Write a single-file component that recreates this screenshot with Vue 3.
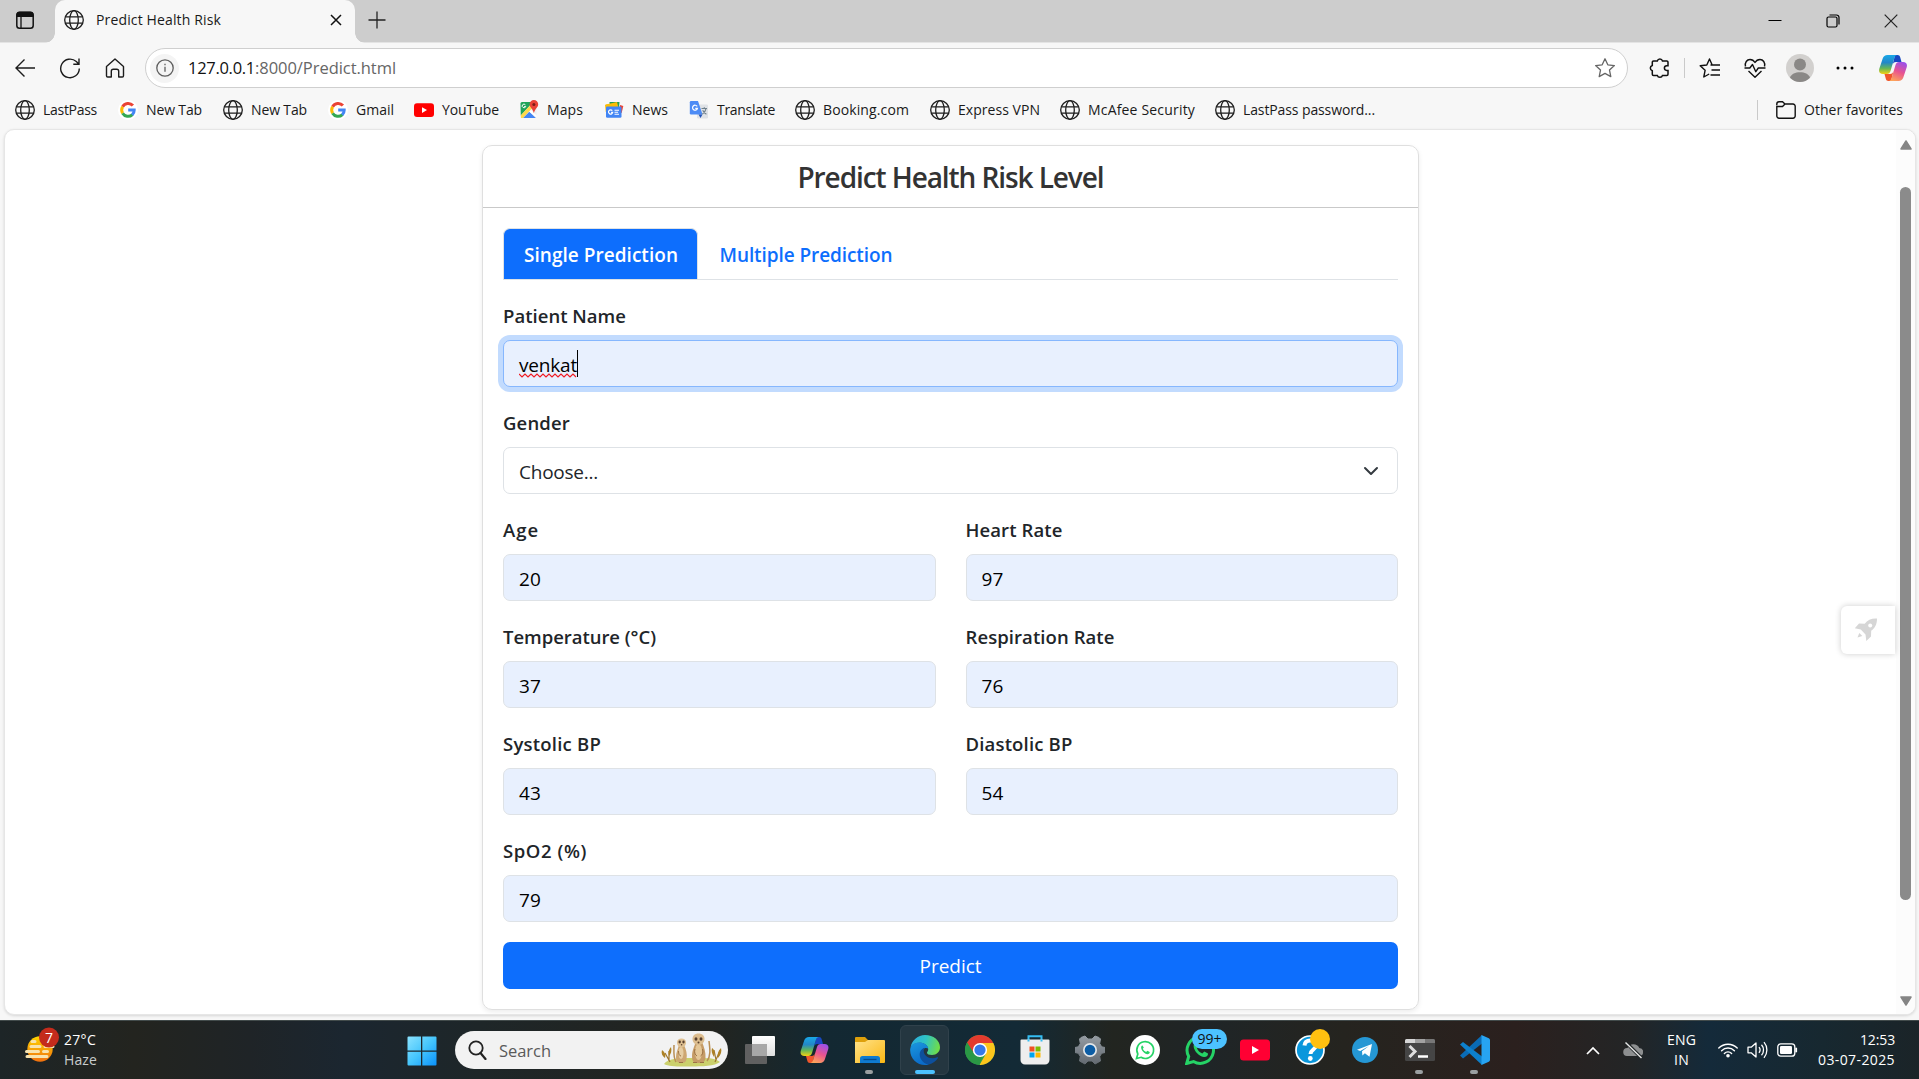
<script setup>
import { ref } from 'vue'

// Adjusts the tracking of a label so that it fills the given measure in px.
const vFit = {
  mounted(el, { value }) {
    el.style.letterSpacing = '0px'
    const natural = el.getBoundingClientRect().width
    el.style.letterSpacing = (value - natural) / el.textContent.trim().length + 'px'
  },
}

const bookmarks = [
  { icon: 'globe', label: 'LastPass', measure: 54, slot: 103 },
  { icon: 'google', label: 'New Tab', measure: 56, slot: 105 },
  { icon: 'globe', label: 'New Tab', measure: 56, slot: 105 },
  { icon: 'google', label: 'Gmail', measure: 38, slot: 86 },
  { icon: 'youtube', label: 'YouTube', measure: 57, slot: 105 },
  { icon: 'maps', label: 'Maps', measure: 36, slot: 85 },
  { icon: 'news', label: 'News', measure: 36, slot: 85 },
  { icon: 'translate', label: 'Translate', measure: 58, slot: 106 },
  { icon: 'globe', label: 'Booking.com', measure: 86, slot: 135 },
  { icon: 'globe', label: 'Express VPN', measure: 82, slot: 130 },
  { icon: 'globe', label: 'McAfee Security', measure: 107, slot: 155 },
  { icon: 'globe', label: 'LastPass password...', measure: 132, slot: 165 },
]

const rows = ref([
  [
    { label: 'Age', measure: 36, value: '20' },
    { label: 'Heart Rate', measure: 97, value: '97' },
  ],
  [
    { label: 'Temperature (°C)', measure: 153, value: '37' },
    { label: 'Respiration Rate', measure: 149, value: '76' },
  ],
  [
    { label: 'Systolic BP', measure: 98, value: '43' },
    { label: 'Diastolic BP', measure: 107, value: '54' },
  ],
  [{ label: 'SpO2 (%)', measure: 84, value: '79' }],
])
</script>

<template>
  <div class="screen">
    <svg class="defs" width="0" height="0" aria-hidden="true">
      <defs>
        <symbol id="globe" viewBox="0 0 20 20">
          <g fill="none" stroke="#1d1d1d" stroke-width="1.3">
            <circle cx="10" cy="10" r="9.3" />
            <ellipse cx="10" cy="10" rx="4.3" ry="9.3" />
            <path d="M1.3 6.8h17.4M1.3 13.2h17.4" />
          </g>
        </symbol>
        <symbol id="google" viewBox="0 0 20 20">
          <circle cx="10" cy="10" r="10" fill="#fff" />
          <g fill="none" stroke-width="3">
            <path d="M14.9 5.6A6.3 6.3 0 0 0 4.6 6.8" stroke="#ea4335" />
            <path d="M4.6 6.8a6.3 6.3 0 0 0 0 6.4" stroke="#fbbc05" />
            <path d="M4.6 13.2a6.3 6.3 0 0 0 9.8 1.4" stroke="#34a853" />
            <path d="M14.2 14.8a6.3 6.3 0 0 0 2-4.8H10.2" stroke="#4285f4" />
          </g>
        </symbol>
        <symbol id="youtube" viewBox="0 0 20 20">
          <rect y="3.2" width="20" height="13.8" rx="3" fill="#f00" />
          <path d="M8 7.2v5.8l5-2.9z" fill="#fff" />
        </symbol>
        <symbol id="maps" viewBox="0 0 20 20">
          <rect x="1.5" y="2" width="16" height="16" rx="1.5" fill="#eceff1" />
          <path d="M1.5 3.5A1.5 1.5 0 0 1 3 2h11L1.8 15.5z" fill="#1fa45a" />
          <path d="M1.8 15.3 13 3.4l2.4 2.4L4.2 18H2z" fill="#fdd94c" />
          <path d="m4.2 18 6.1-6.3 6.5 6.3z" fill="#4285f4" />
          <path d="M10.3 11.7 12 10l5.5 5.6v2z" fill="#fff" />
          <path d="M14.9 0a4.3 4.3 0 0 0-4.3 4.3c0 3.2 3.4 4.6 4.3 9 .9-4.4 4.3-5.8 4.3-9A4.3 4.3 0 0 0 14.9 0z" fill="#e94235" />
          <circle cx="14.9" cy="4.4" r="1.5" fill="#7c1c14" />
          <path d="M6.4 4.8a1.8 1.8 0 1 0 .3 1.7H5.2" fill="none" stroke="#fff" stroke-width="1" />
        </symbol>
        <symbol id="news" viewBox="0 0 20 20">
          <path d="M5.500 2h10l-.6 7h-9z" fill="#1e9e52" />
          <path d="m2 4.500 11-2.500 2 8-11 2z" fill="#fbbc04" />
          <path d="m16 5 3.300 1-1.600 7-2.700-1z" fill="#ea4335" />
          <path d="m1 4.800 3-.6v7L1.800 12z" fill="#fbbc04" />
          <rect x="2" y="6.500" width="15.500" height="11.300" rx="1.300" fill="#4285f4" />
          <path d="M8.300 10.700a2.100 2.100 0 1 0 .4 1.700H7.100" fill="none" stroke="#fff" stroke-width="1.200" />
          <path d="M10.500 10.300h4.500M10.500 12.300h3.600M10.500 14.300h4.500" stroke="#fff" stroke-width="1.100" />
        </symbol>
        <symbol id="translate" viewBox="0 0 20 20">
          <rect x="8" y="4.500" width="11" height="14" rx="1.200" fill="#dfe2e6" />
          <path d="M2 1h7l4.500 13.500H2A1.200 1.200 0 0 1 .8 13.300V2.200A1.200 1.200 0 0 1 2 1z" fill="#4c8bf5" />
          <path d="M9.500 14.500h4l-2 3.500z" fill="#2454b8" />
          <path d="M8.200 6.400a2.500 2.500 0 1 0 .3 1.900H6.300" fill="none" stroke="#fff" stroke-width="1.200" />
          <path d="M12.500 8.500h5.500M15.300 7.200v1.300M17 8.700c-.4 2.300-2 4.300-3.600 5.300M13.700 10.200c.8 1.800 2 3 3.700 4" fill="none" stroke="#70808c" stroke-width="1.100" />
        </symbol>
        <linearGradient id="cpA" x1="0" y1="0" x2="0" y2="1">
          <stop offset="0" stop-color="#18a8e8" />
          <stop offset=".4" stop-color="#2387c8" />
          <stop offset=".7" stop-color="#63b658" />
          <stop offset="1" stop-color="#f4d012" />
        </linearGradient>
        <linearGradient id="cpB" x1=".7" y1="0" x2=".3" y2="1">
          <stop offset="0" stop-color="#9b50e8" />
          <stop offset=".5" stop-color="#e9548f" />
          <stop offset="1" stop-color="#fda45a" />
        </linearGradient>
        <symbol id="copilot" viewBox="0 0 28 26">
          <path d="M16 0h2.500c1.500 0 2.300.8 2.700 2.200L22.500 7H17c-2 0-3 1-3.500 3z" fill="#1748c2" />
          <path d="M12 26H9.500c-1.500 0-2.300-.8-2.700-2.200L5.500 19H11c2 0 3-1 3.500-3z" fill="#f0562c" />
          <path d="M8.500 0H18c-1.500.3-2.200 1.600-2.700 3.200L11.500 16c-.6 2-1.700 3-3.700 3H4c-3.200 0-4.600-2.200-3.700-5.200L3.700 3.500C4.500 1.200 6 0 8.500 0z" fill="url(#cpA)" />
          <path d="M19.500 26H10c1.500-.3 2.200-1.600 2.700-3.200L16.500 10c.6-2 1.700-3 3.700-3H24c3.200 0 4.600 2.200 3.700 5.200l-3.400 10.300c-.8 2.300-2.300 3.500-4.800 3.500z" fill="url(#cpB)" />
        </symbol>
      </defs>
    </svg>

    <header class="tabstrip">
      <div class="workspaces">
        <svg width="20" height="20" viewBox="0 0 20 20">
          <rect x="1.800" y="2.500" width="16.400" height="15.700" rx="2.800" fill="none" stroke="#111" stroke-width="1.500" />
          <path d="M1.500 7V4.500A3 3 0 0 1 4.500 1.500h11a3 3 0 0 1 3 3V7z" fill="#111" />
          <path d="M6 7v11" stroke="#111" stroke-width="1.300" />
        </svg>
      </div>
      <div class="tab">
        <svg width="20" height="20"><use href="#globe" /></svg>
        <span class="tab-title"><span v-fit="125">Predict Health Risk</span></span>
        <svg class="tab-close" width="12" height="12" viewBox="0 0 12 12"><path d="M1 1l10 10M11 1 1 11" stroke="#111" stroke-width="1.500" /></svg>
      </div>
      <svg class="new-tab" width="18" height="18" viewBox="0 0 18 18"><path d="M9 .5v17M.5 9h17" stroke="#222" stroke-width="1.300" /></svg>
      <div class="window-controls">
        <svg width="14" height="14" viewBox="0 0 14 14"><path d="M.5 6.500h13" stroke="#000" stroke-width="1" /></svg>
        <svg width="14" height="14" viewBox="0 0 14 14">
          <rect x="1" y="3" width="10" height="10" rx="1.500" fill="none" stroke="#000" stroke-width="1.200" />
          <path d="M3.500 1h7a2.500 2.500 0 0 1 2.500 2.500v7" fill="none" stroke="#000" stroke-width="1.200" />
        </svg>
        <svg width="14" height="14" viewBox="0 0 14 14"><path d="M.7.7l12.600 12.600M13.300.7.7 13.300" stroke="#222" stroke-width="1.200" /></svg>
      </div>
    </header>

    <nav class="toolbar">
      <svg class="nav-icon" width="22" height="22" viewBox="0 0 22 22"><path d="M21 11H2M10.500 2.500 2 11l8.500 8.500" fill="none" stroke="#1c1c1c" stroke-width="1.400" /></svg>
      <svg class="nav-icon" width="22" height="22" viewBox="0 0 22 22"><path d="M20.300 11.500a9.300 9.300 0 1 1-3-6.900L20 7.200M20 1.500v5.700h-5.700" fill="none" stroke="#1c1c1c" stroke-width="1.400" /></svg>
      <svg class="nav-icon" width="22" height="22" viewBox="0 0 22 22"><path d="M2.500 9.500 11 2l8.500 7.500v9.300a1.200 1.200 0 0 1-1.200 1.200h-3.600v-5.800a2 2 0 0 0-2-2h-3.400a2 2 0 0 0-2 2V20H3.700a1.200 1.200 0 0 1-1.200-1.200z" fill="none" stroke="#1c1c1c" stroke-width="1.400" stroke-linejoin="round" /></svg>
      <div class="address">
        <span class="info">
          <svg width="18" height="18" viewBox="0 0 18 18"><circle cx="9" cy="9" r="8.200" fill="none" stroke="#5e5e5e" stroke-width="1.300" /><path d="M9 7.800v5M9 4.800v1.500" stroke="#5e5e5e" stroke-width="1.300" /></svg>
        </span>
        <span class="url"><span v-fit="67" class="host">127.0.0.1</span><span v-fit="141">:8000/Predict.html</span></span>
        <svg class="star" width="22" height="22" viewBox="0 0 22 22"><path d="m11 1.800 2.800 6 6.600.8-4.900 4.500 1.300 6.500-5.800-3.200-5.800 3.200 1.300-6.500-4.900-4.500 6.600-.8z" fill="none" stroke="#666" stroke-width="1.300" stroke-linejoin="round" /></svg>
      </div>
      <svg class="puzzle" width="22" height="22" viewBox="0 0 22 22"><path d="M4.500 4h3.800a2.700 2.700 0 0 1 5.200 0h4.300a1.200 1.200 0 0 1 1.200 1.200v3.600h-1.300a2.300 2.300 0 0 0 0 4.600H19v3.800a1.200 1.200 0 0 1-1.200 1.200h-4.300a2.700 2.700 0 0 1-5.200 0H4.500a1.200 1.200 0 0 1-1.200-1.200v-3.500a2.700 2.700 0 0 1 0-5.200V5.200A1.200 1.200 0 0 1 4.500 4z" fill="none" stroke="#111" stroke-width="1.500" /></svg>
      <i class="divider"></i>
      <svg class="favs" width="22" height="22" viewBox="0 0 22 22"><path d="M13.200 8 10.500 2 7.800 8 1.200 8.800l4.900 4.500L4.800 20l5.400-3M11.500 8h9.500M12.500 13h8.500M11.500 18h9.500" fill="none" stroke="#111" stroke-width="1.400" stroke-linejoin="round" /></svg>
      <svg class="heart" width="22" height="22" viewBox="0 0 22 22"><path d="M1.500 9.500C.5 5.500 3 2.500 6 2.500c2.200 0 3.900 1.200 5 3 1.100-1.800 2.800-3 5-3 3 0 5.500 3 4.500 7M4.500 14l6.500 6.300 6.500-6.300M.5 11h5.300l2.700-3.500 3.300 7.200 2.500-3.700h7.200" fill="none" stroke="#111" stroke-width="1.400" stroke-linejoin="round" /></svg>
      <svg class="avatar" width="28" height="28" viewBox="0 0 28 28">
        <circle cx="14" cy="14" r="14" fill="#d2d0ce" />
        <circle cx="14" cy="10.500" r="6" fill="#8a8886" />
        <path d="M4 23.700C5.500 20 9.200 18.300 14 18.300s8.500 1.700 10 5.400A14 14 0 0 1 14 28a14 14 0 0 1-10-4.300z" fill="#8a8886" />
      </svg>
      <svg class="more" width="18" height="4" viewBox="0 0 18 4"><circle cx="2" cy="2" r="1.500" /><circle cx="9" cy="2" r="1.500" /><circle cx="16" cy="2" r="1.500" /></svg>
      <svg class="copilot" width="28" height="26"><use href="#copilot" /></svg>
    </nav>

    <div class="bookmarks">
      <span v-for="(b, i) in bookmarks" :key="i" class="bookmark" :style="{ width: b.slot + 'px' }">
        <svg width="20" height="20"><use :href="'#' + b.icon" /></svg>
        <span v-fit="b.measure" class="name">{{ b.label }}</span>
      </span>
      <span class="other">
        <svg width="20" height="18" viewBox="0 0 20 18"><path d="M.8 4V3A2.200 2.200 0 0 1 3 .8h3.500L9 3h8a2.200 2.200 0 0 1 2.200 2.200V15a2.200 2.200 0 0 1-2.200 2.200H3A2.200 2.200 0 0 1 .8 15V4.500M.8 5.500h5.700L9 3" fill="none" stroke="#111" stroke-width="1.400" /></svg>
        <span v-fit="99" class="name">Other favorites</span>
      </span>
    </div>

    <main class="viewport">
      <div class="page">
        <section class="card">
          <h4><span v-fit="306">Predict Health Risk Level</span></h4>
          <div class="card-body">
            <div class="tabs">
              <button class="pill active"><span v-fit="154">Single Prediction</span></button>
              <button class="pill"><span v-fit="173">Multiple Prediction</span></button>
            </div>
            <div class="field">
              <label><span v-fit="123">Patient Name</span></label>
              <div class="input focused">
                <span class="typed"><span v-fit="58">venkat</span><svg class="squiggle" width="59" height="5" viewBox="0 0 59 5"><path d="M0 1l3 3 3-3 3 3 3-3 3 3 3-3 3 3 3-3 3 3 3-3 3 3 3-3 3 3 3-3 3 3 3-3 3 3 3-3 3 3" fill="none" stroke="#f01c24" stroke-width="1.200" /></svg></span><i class="caret"></i>
              </div>
            </div>
            <div class="field">
              <label><span v-fit="67">Gender</span></label>
              <div class="input select">
                <span v-fit="79">Choose...</span>
                <svg width="16" height="16" viewBox="0 0 16 16"><path d="m2 5 6 6 6-6" fill="none" stroke="#343a40" stroke-width="2" stroke-linecap="round" stroke-linejoin="round" /></svg>
              </div>
            </div>
            <div v-for="(row, i) in rows" :key="i" class="row">
              <div v-for="f in row" :key="f.label" class="field">
                <label><span v-fit="f.measure">{{ f.label }}</span></label>
                <div class="input"><span v-fit="22">{{ f.value }}</span></div>
              </div>
            </div>
            <button class="predict"><span v-fit="62">Predict</span></button>
          </div>
        </section>
        <div class="rocket">
          <svg width="24" height="26" viewBox="0 0 24 26"><path d="M23 1.500c-5.500-.3-9.500 1.500-12.300 5.300L5 6.500.8 11.300l6 1.200 4.700 5 .8 6.500 4.700-4.500.2-5.700C21 11 23 7.500 23 1.500z" fill="#d6d6d6" /><circle cx="16.200" cy="8.500" r="2" fill="#fff" /><path d="m3.500 20.500 1.800-4.500 3 3z" fill="#d6d6d6" /></svg>
        </div>
      </div>
      <div class="scrollbar">
        <svg width="12" height="10" viewBox="0 0 12 10"><path d="M6 1 11 9H1z" fill="#858585" stroke="#858585" stroke-width="1.500" stroke-linejoin="round" /></svg>
        <i class="thumb"></i>
        <svg width="12" height="10" viewBox="0 0 12 10"><path d="M6 9 1 1h10z" fill="#858585" stroke="#858585" stroke-width="1.500" stroke-linejoin="round" /></svg>
      </div>
    </main>

    <footer class="taskbar">
      <div class="weather">
        <svg width="36" height="38" viewBox="0 0 36 38">
          <defs><linearGradient id="sun" x1="0" y1="0" x2="0" y2="1"><stop offset="0" stop-color="#ffd500" /><stop offset="1" stop-color="#f0700e" /></linearGradient></defs>
          <circle cx="17" cy="22" r="12.700" fill="url(#sun)" />
          <g stroke="#f8e3ae" stroke-width="3" stroke-linecap="round"><path d="M9 14.500h3M8 19.500h9M22 19.500h8M3.500 24.500h12M20.500 24.500h4M4 29.500h20" /></g>
          <circle cx="26" cy="10.500" r="10" fill="#c42b1c" />
          <text x="26" y="15.500" text-anchor="middle" font-size="14" fill="#fff">7</text>
        </svg>
        <div class="weather-text"><span v-fit="32">27°C</span><span v-fit="33" class="dim">Haze</span></div>
      </div>
      <div class="dock">
        <svg class="start" width="30" height="30" viewBox="0 0 30 30">
          <defs><linearGradient id="win" x1="0" y1="0" x2="1" y2="1"><stop offset="0" stop-color="#8be3ff" /><stop offset=".5" stop-color="#45c5fc" /><stop offset="1" stop-color="#0a91fb" /></linearGradient></defs>
          <path d="M1.500.5H14v14H.5v-13a1 1 0 0 1 1-1zM15.300.5h13.200a1 1 0 0 1 1 1v13H15.300zM.5 15.800H14v13.700H1.500a1 1 0 0 1-1-1zM15.300 15.800h14.200v12.700a1 1 0 0 1-1 1H15.300z" fill="url(#win)" />
        </svg>
        <div class="search">
          <svg width="19" height="20" viewBox="0 0 19 20"><circle cx="8" cy="8" r="6.700" fill="none" stroke="#222" stroke-width="1.800" /><path d="m12.500 13 5 6" stroke="#222" stroke-width="2.200" stroke-linecap="round" /></svg>
          <span v-fit="52">Search</span>
          <svg class="meerkats" width="62" height="34" viewBox="0 0 62 34">
            <path d="M3 31c4-6 17-6 28-6s23-1 28 4c-5 4-18 4.500-29 4.500S8 34 3 31z" fill="#cbd06c" />
            <path d="M15 29c-3-5-2-11-2-17M46 28c4-5 3-12 2-20" fill="none" stroke="#b98f55" stroke-width="1.500" />
            <g fill="none" stroke="#9d752c" stroke-width="1.200"><path d="M9 29 4 20M8 28V18M54 29l4-9M55 27l-2-10" /></g>
            <path d="M4 25c-3-2-4-5-3-8 3 2 4 5 3 8zM8 23c-1-4 0-7 2-9 1 4 0 7-2 9zM57 25c3-3 4-7 3-10-3 3-4 6-3 10zM53 24c-2-3-3-6-2-9 3 2 3 6 2 9z" fill="#ad8125" />
            <path d="M18 12h5c2 4 3.500 9 2.500 14-.5 3-2 4-5 4s-5.500-1-5.500-6 2-8 3-12z" fill="#cda671" />
            <ellipse cx="20" cy="20" rx="2.500" ry="6" fill="#e6cda3" />
            <path d="M16 9.500C16 7 17.800 5.500 20.500 5.500S25 7 25 9.500s-1.700 5-4.500 5-4.500-2.500-4.500-5z" fill="#dfc193" />
            <path d="M34.500 9h6.500c2 5 4 10 3.500 16-.5 4-2.500 5-7 5S31 29 31 23s2.500-9 3.500-14z" fill="#c59b66" />
            <ellipse cx="37.500" cy="19" rx="3.500" ry="8" fill="#e4c798" />
            <path d="M31.500 6c0-3.300 2.300-5.500 6-5.500s6 2.200 6 5.500-2.500 6-6 6-6-2.700-6-6z" fill="#dcbd8f" />
            <g fill="#59402e"><ellipse cx="18.700" cy="9" rx="1.200" ry="1.400" /><ellipse cx="22.500" cy="9" rx="1.200" ry="1.400" /><ellipse cx="35" cy="6" rx="1.500" ry="1.700" /><ellipse cx="40" cy="6" rx="1.500" ry="1.700" /><circle cx="20.600" cy="11.700" r=".8" /><circle cx="37.500" cy="9.500" r="1" /></g>
            <path d="M34 16c-1 3 0 6 2 7M41.500 16c1 3 0 6-2 7M17.500 18c0 3 1 5 2.500 5M32 29.500h4M39 29.500h4M18 29.500h4" fill="none" stroke="#9c7245" stroke-width="1" />
          </svg>
        </div>

        <span class="app">
          <svg width="30" height="28" viewBox="0 0 30 28">
            <defs><linearGradient id="tvA" x1="0" y1="0" x2="0" y2="1"><stop offset="0" stop-color="#fff" /><stop offset="1" stop-color="#dedede" /></linearGradient></defs>
            <rect x="7" width="23" height="20" rx="1" fill="url(#tvA)" /><rect y="8" width="22" height="20" rx="1" fill="#606060" /><path d="M7 8h15v12H7z" fill="#a7a7a7" />
          </svg>
        </span>
        <span class="app"><svg width="29" height="26"><use href="#copilot" /></svg></span>
        <span class="app">
          <svg width="30" height="28" viewBox="0 0 30 28">
            <defs><linearGradient id="fold" x1="0" y1="0" x2="1" y2="1"><stop offset="0" stop-color="#ffe28a" /><stop offset="1" stop-color="#fbb813" /></linearGradient></defs>
            <path d="M0 2a1 1 0 0 1 1-1h9l3 3h10v6H0z" fill="#dea00b" />
            <path d="M0 6h10l3-2h16a1 1 0 0 1 1 1v21a1 1 0 0 1-1 1H0z" fill="url(#fold)" />
            <path d="M5 27v-4.500A2.500 2.500 0 0 1 7.500 20h15a2.500 2.500 0 0 1 2.500 2.500V27z" fill="#0f7bd0" /><path d="M8.500 23.500h13" stroke="#064b8c" stroke-width="1.300" />
          </svg>
          <i class="run"></i>
        </span>
        <span class="app current">
          <svg width="30" height="30" viewBox="0 0 30 30">
            <defs>
              <linearGradient id="edA" x1="0" y1=".2" x2="1" y2=".4"><stop offset="0" stop-color="#2aabe2" /><stop offset=".5" stop-color="#2fc3c4" /><stop offset="1" stop-color="#6fdc4a" /></linearGradient>
              <linearGradient id="edB" x1="0" y1="0" x2=".4" y2="1"><stop offset="0" stop-color="#1b98df" /><stop offset="1" stop-color="#0b6cc9" /></linearGradient>
            </defs>
            <path d="M.6 12C2 5 8 0 15 0c8.500 0 15 5.500 15 12.300 0 4.700-3.500 7.700-8 7.700-3 0-5-1-5-2.300 0-1 1.200-1.200 1.200-3.400C18.200 10.500 14 7.800 9.500 7.800 5.500 7.800 2.300 9.500.6 12z" fill="url(#edA)" />
            <path d="M.2 14C.8 10 4.500 7.600 9.300 7.600c4.700 0 8.700 2.700 9 6-3-1.700-7.600.4-7.600 5.200 0 5 3.700 9.700 8.300 10.700C17.700 29.900 16.400 30 15 30 6.500 30-.5 22.700.2 14z" fill="url(#edB)" />
            <path d="M15.500 12.700c-3 .3-5.800 2.700-5.800 6.800 0 5.200 4.500 9.700 9.300 10 3.700-1 7-3.500 9-6.500.3-.6-.2-1-.8-.7-1.400.6-3 .9-4.700.9-5 0-8.800-3.200-8.800-7.200 0-1.400.7-2.600 1.800-3.300z" fill="#0d4f9c" />
          </svg>
          <i class="run on"></i>
        </span>
        <span class="app">
          <svg width="30" height="30" viewBox="0 0 30 30">
            <circle cx="15" cy="15" r="15" fill="#34a04a" />
            <path d="M15 8h13.300A15 15 0 0 0 2 7.500L9 18.500z" fill="#e33b2e" />
            <path d="M28.300 8H15l6.100 10.500L14.500 30A15 15 0 0 0 28.300 8z" fill="#fcc51c" />
            <path d="M2 7.500 9 18.500l6 3.500h2l-2.500 8A15 15 0 0 1 2 7.500z" fill="#2a9845" />
            <circle cx="15" cy="15" r="7.100" fill="#fff" /><circle cx="15" cy="15" r="5.600" fill="#3579e9" />
          </svg>
        </span>
        <span class="app">
          <svg width="30" height="30" viewBox="0 0 30 30">
            <path d="M8.500 6V1.200h13V6" fill="none" stroke="#35bdf2" stroke-width="2" />
            <path d="M.5 5.500A1 1 0 0 1 1.500 4.500h27a1 1 0 0 1 1 1V25a4.500 4.500 0 0 1-4.500 4.500H5A4.500 4.500 0 0 1 .5 25z" fill="#eee" />
            <path d="M9.500 11.500h5v5h-5z" fill="#f25022" /><path d="M15.500 11.500h5v5h-5z" fill="#7fba00" /><path d="M9.500 17.500h5v5h-5z" fill="#00a4ef" /><path d="M15.500 17.500h5v5h-5z" fill="#ffb900" />
            <path d="M8.500 4.500v2M21.500 4.500v2" stroke="#35bdf2" stroke-width="2" />
          </svg>
        </span>
        <span class="app">
          <svg width="30" height="30" viewBox="0 0 30 30">
            <defs><linearGradient id="gear" x1="0" y1="0" x2="0" y2="1"><stop offset="0" stop-color="#949ba2" /><stop offset="1" stop-color="#636a71" /></linearGradient></defs>
            <path d="M6 2.500 10 1l3 3h4l3-3 4 1.500 1.500 1.500-.8 4.500 2 3.300L30 12.500v5l-3.300.8-2 3.300.8 4.400L20 29l-3-3h-4l-3 3-5.500-3 .8-4.400-2-3.300L0 17.500v-5l3.300-.7 2-3.300L4.500 4z" fill="url(#gear)" stroke="url(#gear)" stroke-linejoin="round" />
            <circle cx="15" cy="15" r="7" fill="#e3e6e8" /><circle cx="15" cy="15" r="5.300" fill="#0c5da5" />
          </svg>
        </span>
        <span class="app">
          <svg width="30" height="30" viewBox="0 0 30 30">
            <circle cx="15" cy="15" r="15" fill="#fff" />
            <path d="m6.500 23.500 1.300-4.500A8.400 8.400 0 1 1 11 22.300z" fill="none" stroke="#25d366" stroke-width="1.700" />
            <path d="M12.200 10.200c-3 1.800.7 8.300 5 9 1.600.1 2.700-1 2.500-2.300l-2.300-1.200-1.300 1.300c-1.600-.7-2.600-1.700-3.300-3.200l1-1.200z" fill="#25d366" />
          </svg>
        </span>
        <span class="app">
          <svg width="30" height="30" viewBox="0 0 30 30">
            <path d="m1.700 28.500 2-7A13.200 13.200 0 1 1 8.500 26.500z" fill="none" stroke="#25d366" stroke-width="3" />
            <path d="M10.500 7.500c-5 3 1 13.500 8.500 14.500 2.500.2 4.300-1.500 4-3.500L19.300 16.500 17.300 18.500c-2.500-1-4.300-2.700-5.300-5.200l1.500-1.800z" fill="#25d366" />
          </svg>
          <b class="count"><span v-fit="24">99+</span></b>
        </span>
        <span class="app"><svg width="30" height="22" viewBox="0 0 30 22"><rect y=".5" width="30" height="21" rx="3.500" fill="#ff0033" /><path d="M12 7v8l7-4z" fill="#fff" /></svg></span>
        <span class="app">
          <svg width="30" height="30" viewBox="0 0 30 30">
            <circle cx="15" cy="15" r="14" fill="#0a97dc" stroke="#fff" stroke-width="1.700" />
            <path d="M9.500 10.500c.3-3.700 3-5 5.800-5 3 0 5.700 1.600 5.700 4.900 0 4-5.500 4.300-5.500 8.600" fill="none" stroke="#fff" stroke-width="4" /><circle cx="15.300" cy="23.500" r="2.400" fill="#fff" />
          </svg>
          <i class="alert"></i>
        </span>
        <span class="app"><svg width="26" height="26" viewBox="0 0 26 26"><circle cx="13" cy="13" r="13" fill="#2597d4" /><path d="M5 12.800 20 7l-2.500 12.700-4.600-3.400-2.500 2.200-.4-4.300 7-5.200-8.800 5z" fill="#fff" /></svg></span>
        <span class="app">
          <svg width="30" height="24" viewBox="0 0 30 24"><rect y="1" width="30" height="22" rx="1.500" fill="#454545" /><path d="M0 5V2.500A1.500 1.500 0 0 1 1.500 1H10v4z" fill="#d5d5d5" /><path d="M10 1h10v4H10z" fill="#a1a1a1" /><path d="M20 1h8.500A1.500 1.500 0 0 1 30 2.500V5H20z" fill="#777" /><path d="m4.500 8 5.500 5.500-5.500 5.500" fill="none" stroke="#ddd" stroke-width="3" /><path d="M13 18.500h10" stroke="#fff" stroke-width="2.500" /></svg>
          <i class="run"></i>
        </span>
        <span class="app">
          <svg width="30" height="30" viewBox="0 0 30 30"><path d="M22 0v8.500L3 23.500 0 20.500z" fill="#0a6bb5" /><path d="M22 30v-8.500L3 7 0 9.500z" fill="#0d80cc" /><path d="m21.500 0 7.300 3.300A2 2 0 0 1 30 5v20a2 2 0 0 1-1.200 1.700L21.500 30z" fill="#27a4f2" /></svg>
          <i class="run"></i>
        </span>
      </div>
      <div class="tray">
        <svg class="chev" width="14" height="9" viewBox="0 0 14 9"><path d="m1 8 6-6 6 6" fill="none" stroke="#fff" stroke-width="1.700" /></svg>
        <svg class="cloud" width="20" height="18" viewBox="0 0 20 18"><path d="M4 15a4 4 0 0 1 .5-8A6.500 6.500 0 0 1 16.300 7 4 4 0 0 1 16 15z" fill="#8d8f90" /><path d="m2.500 1 16 16" stroke="#222728" stroke-width="3.400" /><path d="m2.500 1.500 16 15.500" stroke="#e7e7e7" stroke-width="1.400" /></svg>
        <div class="lang"><span v-fit="29">ENG</span><span v-fit="15">IN</span></div>
        <svg class="wifi" width="20" height="16" viewBox="0 0 20 16"><g fill="none" stroke="#fff" stroke-width="1.400" stroke-linecap="round"><path d="M.8 6a13 13 0 0 1 18.400 0M3.600 8.700a9 9 0 0 1 12.800 0M6.400 11.400a5 5 0 0 1 7.200 0" /></g><circle cx="10" cy="13.800" r="1.800" fill="#fff" /></svg>
        <svg class="sound" width="21" height="18" viewBox="0 0 21 18"><path d="M1 6.200h3.200L9 2v14l-4.800-4.200H1z" fill="none" stroke="#fff" stroke-width="1.300" stroke-linejoin="round" /><path d="M12 6.200a4.500 4.500 0 0 1 0 5.600M14.500 3.700a8 8 0 0 1 0 10.600M17 1.200a12 12 0 0 1 0 15.600" fill="none" stroke="#fff" stroke-width="1.300" /></svg>
        <svg class="battery" width="21" height="14" viewBox="0 0 21 14"><rect x=".8" y=".8" width="17" height="12.400" rx="3" fill="none" stroke="#fff" stroke-width="1.300" /><rect x="3" y="3" width="12" height="8" rx="1.300" fill="#fff" /><path d="M19.200 4.700v4.600" stroke="#fff" stroke-width="1.800" /></svg>
        <div class="clock"><span v-fit="35">12:53</span><span v-fit="77">03-07-2025</span></div>
      </div>
    </footer>
  </div>
</template>

<style>
body {
  margin: 0;
  overflow: hidden;
}
</style>

<style scoped>
.screen {
  box-sizing: border-box;
  width: 1919px;
  height: 1079px;
  display: flex;
  flex-direction: column;
  background: #f7f7f7;
  font-family: 'Open Sans', 'Noto Sans', sans-serif;
  color: #1a1a1a;
  overflow: hidden;
}
.screen *,
.screen *::before,
.screen *::after {
  box-sizing: border-box;
}
svg {
  display: block;
  flex: none;
}
span {
  white-space: nowrap;
}
.defs {
  position: absolute;
}

/* tab strip */
.tabstrip {
  display: flex;
  height: 43px;
  flex: none;
  background: #cdcdcd;
  border-bottom: 1px solid #e4e4e4;
}
.workspaces {
  width: 55px;
  padding: 10px 0 0 15px;
  border-bottom-right-radius: 10px;
}
.tab {
  position: relative;
  display: flex;
  align-items: center;
  width: 300px;
  height: 43px;
  padding: 0 13px 3px 9px;
  background: #f7f7f7;
  border-radius: 10px 10px 0 0;
}
.tab::before,
.tab::after {
  content: '';
  position: absolute;
  bottom: 0;
  width: 10px;
  height: 10px;
}
.tab::before {
  left: -10px;
  background: radial-gradient(circle at 0 0, transparent 9.5px, #f7f7f7 10px);
}
.tab::after {
  right: -10px;
  background: radial-gradient(circle at 100% 0, transparent 9.5px, #f7f7f7 10px);
}
.tab-title {
  margin-left: 12px;
  padding-bottom: 2px;
  font-size: 14px;
}
.tab-close {
  margin-left: auto;
}
.new-tab {
  margin: 11px 0 0 13px;
}
.window-controls {
  display: flex;
  gap: 44px;
  margin: 14px 21px 0 auto;
}

/* toolbar */
.toolbar {
  display: flex;
  align-items: center;
  height: 50px;
  flex: none;
  padding: 0 12px 0 14px;
}
.nav-icon {
  margin: 0 23px 1px 0;
}
.address {
  display: flex;
  align-items: center;
  width: 1483px;
  height: 40px;
  margin-left: -4px;
  padding: 0 11px 0 4px;
  background: #fff;
  border: 1px solid #cfcfcf;
  border-radius: 20px;
}
.info {
  display: grid;
  place-items: center;
  width: 29px;
  height: 29px;
  border-radius: 50%;
  background: #f4f4f4;
}
.url {
  margin-left: 9px;
  padding-bottom: 2px;
  font-size: 16.500px;
  color: #666;
}
.host {
  color: #111;
}
.star {
  margin-left: auto;
}
.puzzle {
  margin-left: 21px;
}
.divider {
  width: 1px;
  height: 20px;
  margin-left: 13px;
  background: #cacaca;
}
.favs {
  margin-left: 14px;
}
.heart {
  margin-left: 23px;
}
.avatar {
  margin-left: 20px;
}
.more {
  margin-left: 22px;
}
.copilot {
  margin-left: auto;
}

/* bookmarks */
.bookmarks {
  display: flex;
  align-items: center;
  height: 36px;
  flex: none;
  padding: 0 16px 2px 15px;
  font-size: 14px;
}
.bookmark,
.other {
  display: flex;
  align-items: center;
  gap: 8px;
  flex: none;
}
.name {
  padding-bottom: 2px;
}
.other {
  height: 20px;
  margin-left: auto;
  padding-left: 18px;
  border-left: 1px solid #cacaca;
}

/* page */
.viewport {
  display: flex;
  height: 886px;
  flex: none;
  margin: 0 3px 0 4px;
  background: #fff;
  border: 1px solid #e6e6e6;
  border-radius: 10px;
  box-shadow: 0 1px 3px #0002;
  overflow: hidden;
}
.page {
  position: relative;
  width: 1891px;
}
.card {
  width: 937px;
  height: 865px;
  margin: 15px 0 0 477px;
  border: 1px solid #dfdfdf;
  border-radius: 10px;
  box-shadow: 0 2px 5px #00000013;
}
h4 {
  display: flex;
  align-items: center;
  justify-content: center;
  height: 62px;
  margin: 0;
  padding-top: 1px;
  border-bottom: 1px solid #c9c9c9;
  font-size: 28px;
  font-weight: 600;
  color: #333;
}
.card-body {
  padding: 20px;
  font-size: 19px;
}
.tabs {
  display: flex;
  height: 52px;
  margin-bottom: 20px;
  border-bottom: 1px solid #dee2e6;
}
button {
  display: flex;
  align-items: center;
  justify-content: center;
  border: 0;
  font-family: inherit;
  font-size: 19px;
}
.pill {
  width: 195px;
  padding: 2px 0 0 1px;
  background: none;
  color: #0d6efd;
  font-weight: 600;
}
.pill + .pill {
  width: 215px;
}
.pill.active {
  background: #0d6efd;
  color: #fff;
  border: 1px solid #dee2e6;
  border-bottom: 0;
  border-radius: 7px 7px 0 0;
}
.field {
  flex: 1;
  margin-bottom: 20px;
}
label {
  display: block;
  height: 30px;
  margin-bottom: 10px;
  line-height: 32px;
  font-weight: 600;
  font-size: 18.500px;
  color: #212529;
}
.input {
  display: flex;
  align-items: center;
  height: 47px;
  padding: 3px 15px 0;
  background: #e8f0fe;
  border: 1px solid #dee2e6;
  border-radius: 7px;
  color: #000;
}
.focused {
  border-color: #86b7fe;
  box-shadow: 0 0 0 5px #c2dbfe;
}
.typed {
  position: relative;
}
.squiggle {
  position: absolute;
  left: 0;
  bottom: 0;
}
.caret {
  width: 1px;
  height: 27px;
  margin-top: -4px;
  background: #000;
}
.select {
  justify-content: space-between;
  padding-right: 18px;
  background: #fff;
  color: #212529;
}
.select svg {
  margin-top: -3px;
}
.row {
  display: flex;
  gap: 30px;
}
.predict {
  width: 100%;
  height: 47px;
  padding: 1px 0 0;
  border-radius: 7px;
  background: #0d6efd;
  color: #fff;
}
.rocket {
  position: absolute;
  right: 1px;
  top: 476px;
  display: grid;
  place-items: center;
  width: 54px;
  height: 48px;
  padding-right: 5px;
  border-radius: 6px 0 0 6px;
  background: #fff;
  box-shadow: 0 0 6px #0003;
}
.scrollbar {
  display: flex;
  flex-direction: column;
  align-items: center;
  width: 19px;
  padding: 10px 0 8px;
  background: #fcfcfc;
}
.thumb {
  width: 11px;
  height: 713px;
  margin: 37px 0 auto;
  border-radius: 6px;
  background: #8b8b8b;
}

/* taskbar */
.taskbar {
  display: flex;
  height: 59px;
  margin-top: auto;
  flex: none;
  border-top: 1px solid #424b4b;
  background: linear-gradient(90deg, #1d2527 0, #23241f 7%, #1f2427 13%, #1b2630 18%, #1e2628 25%, #23241f 37%, #132832 43%, #132a36 53%, #222520 58%, #1f2527 63%, #25241f 70%, #2b201e 79%, #232526 85%, #142a3a 89%, #172830 95%, #1b2428 100%);
  color: #fff;
  font-size: 14px;
}
.weather {
  display: flex;
  width: 407px;
  padding: 6px 0 0 23px;
}
.weather-text {
  display: flex;
  flex-direction: column;
  align-items: flex-start;
  margin: 3px 0 0 5px;
  line-height: 20px;
}
.dim {
  color: #c8cccd;
}
.dock {
  display: flex;
  align-items: flex-start;
  width: 1179px;
}
.start {
  margin-top: 15px;
}
.search {
  display: flex;
  align-items: center;
  width: 273px;
  height: 38px;
  margin: 10px 4px 0 18px;
  padding: 0 5px 0 13px;
  border-radius: 19px;
  background: #f2f2f2;
  color: #5a5a5a;
  font-size: 16.500px;
}
.search span {
  margin-left: 12px;
}
.meerkats {
  margin-left: auto;
}
.app {
  position: relative;
  display: grid;
  place-items: center;
  width: 49px;
  height: 50px;
  margin: 4px 3px 0;
}
.current {
  border: 1px solid #30414b;
  border-radius: 6px;
  background: #243640;
}
.run {
  position: absolute;
  left: 20px;
  bottom: 1px;
  width: 8px;
  height: 4px;
  border-radius: 2px;
  background: #9a9fa1;
}
.run.on {
  left: 14px;
  bottom: 0;
  width: 20px;
  background: #4cc2ff;
}
.count {
  position: absolute;
  left: 17px;
  top: 4px;
  width: 35px;
  height: 20px;
  border-radius: 10px;
  background: #4cc2ff;
  color: #111;
  font-weight: 400;
  line-height: 20px;
  text-align: center;
}
.alert {
  position: absolute;
  left: 25px;
  top: 4px;
  width: 20px;
  height: 20px;
  border-radius: 50%;
  background: #ffc010;
}
.tray {
  display: flex;
  align-items: center;
  flex: 1;
  height: 58px;
  padding-right: 24px;
}
.cloud {
  margin-left: 23px;
}
.lang,
.clock {
  display: flex;
  flex-direction: column;
  align-items: center;
  line-height: 20px;
}
.lang {
  margin-left: 24px;
}
.wifi {
  margin-left: 22px;
}
.sound,
.battery {
  margin-left: 9px;
}
.clock {
  align-items: flex-end;
  margin-left: auto;
}
</style>
